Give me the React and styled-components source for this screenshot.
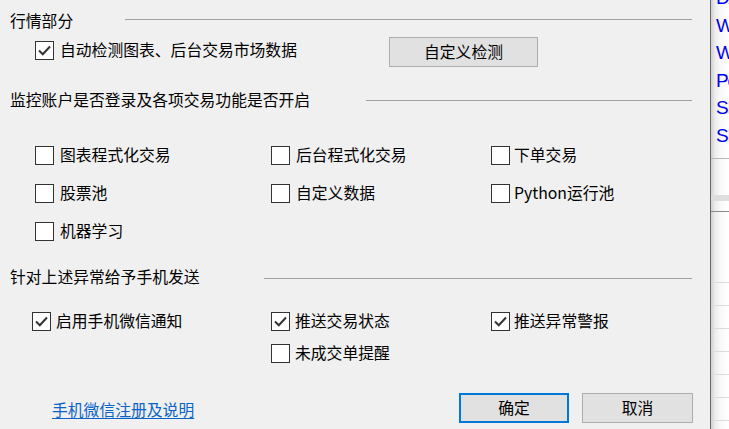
import React from "react";
import styled, { createGlobalStyle } from "styled-components";

const Global = createGlobalStyle`
  html, body { margin: 0; padding: 0; background: #f0f0f0; }
  body { font-family: "Noto Sans CJK SC", "Noto Sans", sans-serif; }
  * { box-sizing: border-box; }
`;

const Screen = styled.div`
  display: flex;
  width: 729px;
  height: 429px;
  overflow: hidden;
`;

const Dialog = styled.div`
  width: 710px;
  flex: 0 0 710px;
  height: 429px;
  background: #f0f0f0;
  padding: 0 18px 0 10px;
  display: flex;
  flex-direction: column;
  font-size: 15.8px;
  color: #000;
`;

const Header = styled.div`
  display: flex;
  align-items: center;
  height: 20px;
  margin-top: ${(p) => p.$top}px;
`;

const HeaderLabel = styled.div`
  flex: 0 0 ${(p) => p.$w}px;
  line-height: 20px;
  white-space: nowrap;
`;

const HeaderLine = styled.div`
  flex: 1;
  height: 1px;
  background: #a0a0a0;
  margin-top: ${(p) => p.$dy || 0}px;
`;

const TopRow = styled.div`
  display: flex;
  align-items: center;
  height: 36px;
  margin-top: 3px;
  padding-left: 25px;
`;

const TopCheckSlot = styled.div`
  flex: 0 0 354px;
  margin-top: -4px;
`;

const Grid = styled.div`
  display: grid;
  grid-template-columns: ${(p) => p.$cols};
  grid-auto-rows: ${(p) => p.$rowH}px;
  align-items: center;
  margin-top: ${(p) => p.$top}px;
  padding-left: ${(p) => p.$pad}px;
`;

const CheckItem = styled.label`
  display: flex;
  align-items: center;
  gap: ${(p) => p.$gap ?? 6}px;
  white-space: nowrap;
  line-height: 20px;
`;

const Box = styled.span`
  width: 19px;
  height: 19px;
  flex: 0 0 19px;
  border: 1px solid #333;
  background: #fff;
  display: flex;
  align-items: center;
  justify-content: center;
`;

const Button = styled.div`
  width: ${(p) => p.$w}px;
  height: 30px;
  display: flex;
  align-items: center;
  justify-content: center;
  background: #e1e1e1;
  border: ${(p) => (p.$primary ? "2px solid #0078d7" : "1px solid #adadad")};
  font-size: 15.8px;
  line-height: 20px;
`;

const Footer = styled.div`
  display: flex;
  align-items: center;
  height: 30px;
  margin-top: 24px;
  margin-right: -1px;
  padding-left: 42px;
`;

const Link = styled.span`
  color: #0a64c8;
  text-decoration: underline;
  text-underline-offset: 2px;
  margin-top: 2px;
`;

const Buttons = styled.div`
  margin-left: auto;
  display: flex;
  gap: 13px;
`;

const Side = styled.div`
  flex: 1;
  height: 429px;
  border-left: 1px solid #6a6a6a;
  background: linear-gradient(to right, #cfcfcf 0px, #ececec 4px, #f8f8f8 9px, #ffffff 18px);
  display: flex;
  flex-direction: column;
  overflow: hidden;
`;

const SideList = styled.div`
  height: 158px;
  flex: 0 0 158px;
  padding-left: 5px;
  display: flex;
  flex-direction: column;
  padding-top: 0;
  overflow: hidden;
`;

const SideItem = styled.div`
  flex: 0 0 27.6px;
  height: 27.6px;
  line-height: 27.6px;
  font-family: "Liberation Sans", Arial, sans-serif;
  font-size: 19px;
  letter-spacing: -1.2px;
  color: #0000f0;
  white-space: nowrap;
  margin-top: ${(p) => p.$top || 0}px;
`;

const SideRule = styled.div`
  height: 1px;
  background: ${(p) => p.$c};
  margin-top: ${(p) => p.$top}px;
  flex: 0 0 1px;
`;

const SideBand = styled.div`
  height: ${(p) => p.$h}px;
  margin-top: ${(p) => p.$top}px;
  background: #dedede;
  flex: 0 0 auto;
`;

const SideRow = styled.div`
  flex: 0 0 23px;
  height: 23px;
  border-bottom: 1px solid #dcdcdc;
`;

const Check = ({ checked }) => (
  <Box>
    {checked && (
      <svg width="17" height="17" viewBox="0 0 17 17">
        <polyline
          points="3,8.5 6.8,12.2 14,4.5"
          fill="none"
          stroke="#333"
          strokeWidth="2"
        />
      </svg>
    )}
  </Box>
);

const Option = ({ checked, children, gap }) => (
  <CheckItem $gap={gap}>
    <Check checked={checked} />
    <span>{children}</span>
  </CheckItem>
);

export default function App() {
  return (
    <>
      <Global />
      <Screen>
        <Dialog>
          <Header $top={11}>
            <HeaderLabel $w={115}>行情部分</HeaderLabel>
            <HeaderLine $dy={-3} />
          </Header>
          <TopRow>
            <TopCheckSlot>
              <Option checked>自动检测图表、后台交易市场数据</Option>
            </TopCheckSlot>
            <Button $w={149}>自定义检测</Button>
          </TopRow>

          <Header $top={20}>
            <HeaderLabel $w={356}>监控账户是否登录及各项交易功能是否开启</HeaderLabel>
            <HeaderLine />
          </Header>
          <Grid $cols="236px 220px 1fr" $rowH={38} $top={26} $pad={25}>
            <Option>图表程式化交易</Option>
            <Option>后台程式化交易</Option>
            <Option gap={4}>下单交易</Option>
            <Option>股票池</Option>
            <Option>自定义数据</Option>
            <Option gap={4}>Python运行池</Option>
            <Option>机器学习</Option>
          </Grid>

          <Header $top={17}>
            <HeaderLabel $w={254}>针对上述异常给予手机发送</HeaderLabel>
            <HeaderLine $dy={2} />
          </Header>
          <Grid $cols="239px 220px 1fr" $rowH={32} $top={18} $pad={22}>
            <Option checked gap={5}>启用手机微信通知</Option>
            <Option checked gap={5}>推送交易状态</Option>
            <Option checked gap={4}>推送异常警报</Option>
            <span />
            <Option gap={5}>未成交单提醒</Option>
          </Grid>

          <Footer>
            <Link>手机微信注册及说明</Link>
            <Buttons>
              <Button $w={110} $primary>确定</Button>
              <Button $w={111}>取消</Button>
            </Buttons>
          </Footer>
        </Dialog>
        <Side>
          <SideList>
            <SideItem $top={-16}>DAX</SideItem>
            <SideItem>WTI</SideItem>
            <SideItem>WS</SideItem>
            <SideItem>Pos</SideItem>
            <SideItem>SET</SideItem>
            <SideItem>SEK</SideItem>
          </SideList>
          <SideRule $c="#b8b8b8" $top={0} />
          <SideBand $h={6} $top={36} />
          <SideRule $c="#8a8a8a" $top={10} />
          <SideBand $h={0} $top={48} />
          {Array.from({ length: 8 }).map((_, i) => (
            <SideRow key={i} />
          ))}
        </Side>
      </Screen>
    </>
  );
}
